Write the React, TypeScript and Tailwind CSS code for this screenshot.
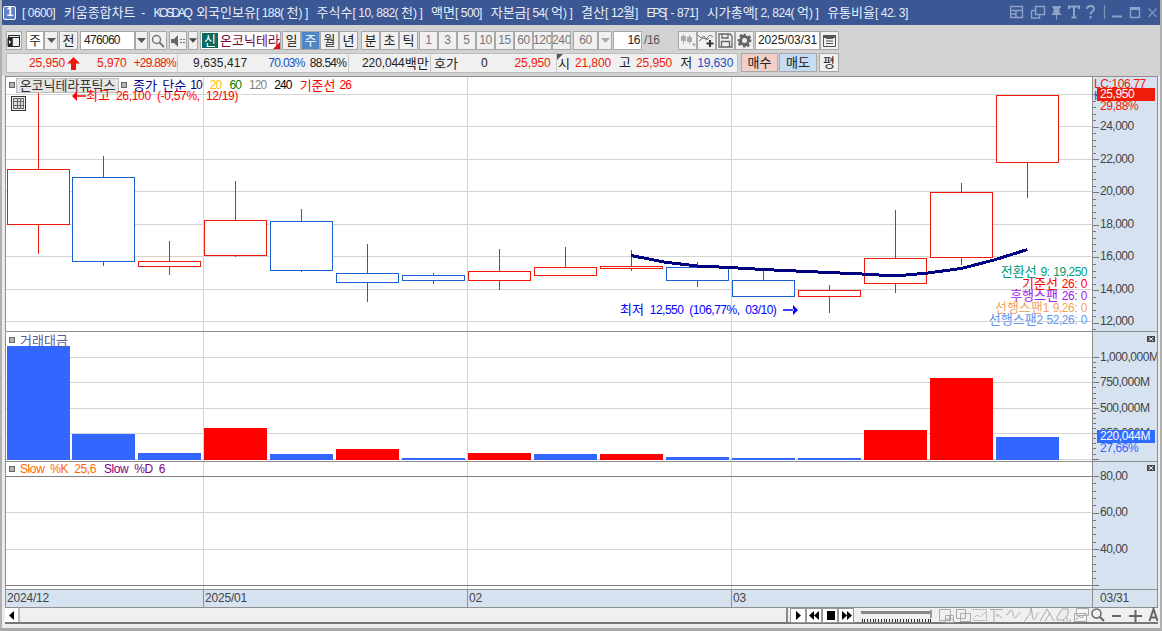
import type { ReactNode } from "react";

const RED = "#f01808";
const BLUE = "#1a5fd0";
const HANGUL = /([\uAC00-\uD7A3]+)/;
const PUNCT = /([\[\](),.\-])/;

const candles = [
  { top: 169, bot: 224, hi: 92, lo: 254, up: true },
  { top: 177, bot: 261, hi: 156, lo: 266, up: false },
  { top: 261, bot: 266, hi: 241, lo: 275, up: true },
  { top: 220, bot: 255, hi: 181, lo: 257, up: true },
  { top: 221, bot: 270, hi: 209, lo: 272, up: false },
  { top: 273, bot: 282, hi: 244, lo: 302, up: false },
  { top: 275, bot: 280, hi: 273, lo: 284, up: false },
  { top: 271, bot: 280, hi: 249, lo: 290, up: true },
  { top: 267, bot: 275, hi: 247, lo: 275, up: true },
  { top: 266, bot: 268, hi: 250, lo: 271, up: true },
  { top: 267, bot: 280, hi: 262, lo: 287, up: false },
  { top: 280, bot: 296, hi: 269, lo: 297, up: false },
  { top: 290, bot: 296, hi: 285, lo: 313, up: true },
  { top: 258, bot: 283, hi: 210, lo: 293, up: true },
  { top: 192, bot: 257, hi: 183, lo: 265, up: true },
  { top: 95, bot: 162, hi: 95, lo: 198, up: true },
];

const volumes = [
  { top: 346, up: false },
  { top: 434, up: false },
  { top: 453, up: false },
  { top: 428, up: true },
  { top: 454, up: false },
  { top: 449, up: true },
  { top: 458, up: false },
  { top: 453, up: true },
  { top: 454, up: false },
  { top: 454, up: true },
  { top: 457, up: false },
  { top: 458, up: false },
  { top: 458, up: false },
  { top: 430, up: true },
  { top: 378, up: true },
  { top: 437, up: false },
];

const vLines = [203, 467, 731];

// first bar sits 1px off the 66px period
const barX = (i: number) => (i === 0 ? 7 : 6 + 66 * i);

// hangul runs are 12px wide per glyph in the reference
function Tx({ children }: { children: string }) {
  return (
    <>
      {children.split(HANGUL).map((part, i) =>
        i % 2 === 1 ? (
          <span key={i} className="text-[13px] tracking-[0px]">
            {part}
          </span>
        ) : (
          part
        ),
      )}
    </>
  );
}

// 타이틀: 괄호/구두점도 반각 폭
function TitleTx({ children }: { children: string }) {
  return (
    <>
      {children.split(PUNCT).map((part, i) =>
        i % 2 === 1 ? (
          <span key={i} className="tracking-[2.5px]">
            {part}
          </span>
        ) : (
          <Tx key={i}>{part}</Tx>
        ),
      )}
    </>
  );
}

function SvgTx({ children }: { children: string }) {
  return (
    <>
      {children.split(HANGUL).map((part, i) =>
        i % 2 === 1 ? (
          <tspan key={i} fontSize={13} letterSpacing={0}>
            {part}
          </tspan>
        ) : (
          <tspan key={i}>{part}</tspan>
        ),
      )}
    </>
  );
}

function Grid({ ys, y1, y2 }: { ys: number[]; y1: number; y2: number }) {
  return (
    <g shapeRendering="crispEdges" stroke="#d4d4d4">
      {ys.map((y) => (
        <line key={y} x1={6} x2={1092} y1={y + 0.5} y2={y + 0.5} />
      ))}
      {vLines.map((x) => (
        <line key={x} x1={x + 0.5} x2={x + 0.5} y1={y1} y2={y2} />
      ))}
    </g>
  );
}

function Square({ className }: { className: string }) {
  return <span className={`absolute h-[6px] w-[6px] border border-[#666] bg-[#b4b4b4] ${className}`} />;
}

function Axis({
  y1,
  y2,
  first,
  step,
  labels,
  children,
}: {
  y1: number;
  y2: number;
  first: number;
  step: number;
  labels: { y: number; t: string }[];
  children?: ReactNode;
}) {
  const ticks: { y: number; major: boolean }[] = [];
  let n = 0;
  for (let y = first; y < y2; y += step / 5) {
    ticks.push({ y: Math.round(y), major: n % 5 === 0 });
    n++;
  }
  return (
    <div className="relative w-[66px] shrink-0 border-x border-[#8f8f8f] bg-[#d6e2f0]">
      <svg className="block h-full w-full" viewBox={`1093 ${y1} 64 ${y2 - y1}`} preserveAspectRatio="none">
        <g shapeRendering="crispEdges" stroke="#777">
          {ticks.map((t) => (
            <line key={t.y} x1={1093} x2={t.major ? 1099 : 1096} y1={t.y + 0.5} y2={t.y + 0.5} />
          ))}
        </g>
        {labels.map((l) => (
          <text key={l.t} x={1100} y={l.y + 5} fill="#444" fontSize={12} letterSpacing={-0.5}>
            {l.t}
          </text>
        ))}
      </svg>
      {children}
    </div>
  );
}

function CloseBox({ className }: { className: string }) {
  return (
    <span className={`absolute flex h-[6px] w-[8px] items-center justify-center bg-[#444] ${className}`}>
      <svg width="6" height="4" viewBox="0 0 6 4" stroke="#fff" strokeWidth="1">
        <path d="M.5 0l5 4M5.500 0l-5 4" />
      </svg>
    </span>
  );
}

function Btn({
  className = "",
  bg = "bg-[#f0f0f0]",
  children,
}: {
  className?: string;
  bg?: string;
  children?: ReactNode;
}) {
  return (
    <div className={`flex h-[19px] shrink-0 items-center justify-center border border-[#a8a8a8] ${bg} ${className}`}>
      {typeof children === "string" ? <Tx>{children}</Tx> : children}
    </div>
  );
}

function Caret({ color = "#555" }: { color?: string }) {
  return (
    <svg width="9" height="5" viewBox="0 0 9 5">
      <path d="M0 0h9L4.500 5z" fill={color} />
    </svg>
  );
}

function TitleIcons() {
  return (
    <div className="ml-auto flex shrink-0 items-center text-[#8ea3c7]">
      <svg width="152" height="25" viewBox="1010 0 152 25" fill="none" stroke="currentColor" strokeWidth="1.4">
        <path d="M1010.500 6.500h12v11h-12zM1010.500 10.500h12M1016 11v6.500M1011 14h5" />
        <path d="M1035.500 6.500h9v8h-9zM1031.500 10.500h5M1031.500 10.500v7.500h8v-3" />
        <path
          d="M1053 6h8v1.500l-1.500 1v4l2.500 2.500h-5v4.500h-1v-4.500h-5l2.500-2.500v-4l-1.500-1z"
          fill="currentColor"
          stroke="none"
        />
        <path d="M1069 9V6.500h10V9M1074 6.500v11M1071.500 17.500h5" strokeWidth="2" />
        <path d="M1087 9c0-4 7-4 7 0c0 2.500-3.500 2.500-3.500 5.500M1090.500 16v2.500" strokeWidth="2" />
        <path d="M1104.500 5v14" stroke="#7d8fb2" />
        <path d="M1112 16.500h10" strokeWidth="2" />
        <path d="M1130.500 8h9v9.500h-9z" />
        <path d="M1130 8.500h10" strokeWidth="3" />
        <path d="M1148.500 8.500l8 8.500M1156.500 8.500l-8 8.500" stroke="#7c92ba" />
      </svg>
    </div>
  );
}

function Toolbar() {
  return (
    <div className="flex h-[26px] shrink-0 items-end pb-[1px] pl-[4px]">
      <Btn className="w-[16px]">
        <svg width="14" height="14" viewBox="0 0 14 14" fill="none" stroke="#222">
          <path d="M1.500 1.500h11v11h-11zM1 3.500h12M5 3.500v9" />
          <path d="M1 4h4v8.500H1z" fill="#222" />
          <path d="M2 6l2 2-2 2z" fill="#fff" stroke="none" />
        </svg>
      </Btn>
      <Btn className="ml-[4px] w-[18px]" bg="bg-white">
        주
      </Btn>
      <Btn className="w-[14px]">
        <Caret />
      </Btn>
      <Btn className="ml-[1px] w-[19px]">전</Btn>
      <Btn className="ml-[2px] w-[55px] justify-start pl-[3px] tracking-[-0.7px]" bg="bg-white">
        476060
      </Btn>
      <Btn className="w-[13px]">
        <Caret />
      </Btn>
      <Btn className="ml-[1px] w-[18px]">
        <svg width="14" height="14" viewBox="0 0 14 14" fill="none" stroke="#777" strokeWidth="1.500">
          <circle cx="5.500" cy="5.500" r="4" />
          <path d="M8.500 8.500l4.500 4.500" strokeWidth="2" />
        </svg>
      </Btn>
      <Btn className="ml-[2px] w-[18px]">
        <svg width="14" height="12" viewBox="0 0 14 12">
          <path d="M0 4h3l4-4v12l-4-4H0z" fill="#666" />
          <path d="M9 4h2v1H9zM12 4h2v1h-2zM9 7h2v1H9zM12 7h2v1h-2z" fill="#777" />
        </svg>
      </Btn>
      <Btn className="ml-[1px] w-[10px]">
        <Caret color="#444" />
      </Btn>
      <div className="relative ml-[2px] flex h-[19px] w-[81px] shrink-0 items-center border border-[#a8a8a8] bg-white">
        <span className="ml-[1px] flex h-[15px] w-[16px] items-center justify-center bg-[#0b6a5e] text-white">
          <Tx>신</Tx>
        </span>
        <span className="ml-[2px] whitespace-nowrap text-[#7a0a3c]">
          <Tx>온코닉테라</Tx>
        </span>
        <span className="absolute right-0 bottom-0 h-0 w-0 border-b-[7px] border-l-[7px] border-b-[#e01010] border-l-transparent" />
      </div>
      <div className="ml-[1px] flex">
        <Btn className="w-[19px]">일</Btn>
        <Btn className="w-[19px] text-white" bg="bg-[#4f86c6]">
          주
        </Btn>
        <Btn className="w-[19px]">월</Btn>
        <Btn className="w-[19px]">년</Btn>
      </div>
      <div className="ml-[3px] flex">
        <Btn className="w-[19px]">분</Btn>
        <Btn className="w-[19px]">초</Btn>
        <Btn className="w-[19px]">틱</Btn>
      </div>
      <div className="ml-[1px] flex text-[#777]">
        {["1", "3", "5", "10", "15", "60", "120", "240"].map((n) => (
          <Btn key={n} className="w-[19px] overflow-hidden">
            {n}
          </Btn>
        ))}
      </div>
      <Btn className="ml-[2px] w-[25px] text-[#777]">60</Btn>
      <Btn className="w-[14px]">
        <Caret color="#aaa" />
      </Btn>
      <Btn className="ml-[1px] w-[29px] justify-end pr-[1px]" bg="bg-white">
        16
      </Btn>
      <span className="ml-[2px] flex h-[19px] w-[34px] items-center text-[#555]">/16</span>
      <Btn className="w-[19px]">
        <svg width="16" height="15" viewBox="0 0 16 15" fill="#aaa">
          <path d="M1 3h2V1h1v2h2v5H4v3H3V8H1zM7 4h2V2h1v2h2v5h-2v2H9V9H7zM12 11h1.500V9.500h1V11H16v1h-1.500v1.500h-1V12H12z" />
        </svg>
      </Btn>
      <Btn className="w-[19px]">
        <svg width="17" height="15" viewBox="0 0 17 15" fill="none" stroke="#555">
          <path d="M0 2l3 3 3-2 3 4 2-2M1 8l4-3 3 1 4-4 3 2" strokeWidth="0.8" />
          <path d="M12 7v7M8.500 10.500h7" stroke="#333" strokeWidth="2" />
        </svg>
      </Btn>
      <Btn className="w-[19px]">
        <svg width="15" height="15" viewBox="0 0 15 15" fill="none" stroke="#666" strokeWidth="1.300">
          <path d="M1 1h11l2 2v11H1zM4 1v4h6V1M3.500 14V8.500h8V14" />
        </svg>
      </Btn>
      <Btn className="w-[19px]">
        <svg width="15" height="15" viewBox="0 0 24 24" fill="#666">
          <path d="M10 1h4l.6 3.200 2.500 1 2.700-1.800 2.800 2.800-1.800 2.700 1 2.500L23 10v4l-3.200.6-1 2.500 1.800 2.700-2.800 2.800-2.700-1.800-2.500 1L14 23h-4l-.6-3.200-2.500-1-2.700 1.800-2.800-2.800 1.800-2.700-1-2.500L1 14v-4l3.200-.6 1-2.500L3.400 4.200l2.800-2.800 2.700 1.800 2.500-1zM12 8a4 4 0 100 8 4 4 0 000-8z" />
        </svg>
      </Btn>
      <Btn className="ml-[1px] w-[65px] tracking-[-0.1px]" bg="bg-white">
        2025/03/31
      </Btn>
      <Btn className="w-[19px]">
        <svg width="13" height="13" viewBox="0 0 13 13" fill="none" stroke="#555">
          <path d="M.5 1.500h12v11H.5zM3 4.500h7M3 7h7M3 9.500h7" />
          <path d="M.5 1.500h12v2H.5z" fill="#555" />
        </svg>
      </Btn>
    </div>
  );
}

function InfoBar() {
  return (
    <div className="flex h-[25px] shrink-0 items-start pt-[2px] pl-[4px] tracking-[-0.1px] whitespace-nowrap">
      <div className="flex h-[20px] w-[732px] shrink-0 items-center border border-[#bdbdbd] bg-[#f0f0f0]">
        <div className="flex h-full w-[171px] items-center border-r border-[#c8c8c8] pl-[22px] text-[#f01808]">
          <span>25,950</span>
          <svg className="ml-[2px]" width="13" height="13" viewBox="0 0 13 13" fill="#f01808">
            <path d="M6.500 0L13 6.500H9V13H4V6.500H0z" />
          </svg>
          <span className="ml-[17px]">5,970</span>
          <span className="ml-[7px] tracking-[-0.8px]">+29.88%</span>
        </div>
        <div className="flex h-full w-[171px] items-center border-r border-[#c8c8c8] pl-[15px]">
          <span className="tracking-[0.1px]">9,635,417</span>
          <span className="ml-[21px] tracking-[-0.7px] text-[#1a4fc0]">70.03%</span>
          <span className="ml-[5px] tracking-[-0.7px]">88.54%</span>
        </div>
        <div className="flex h-full w-[82px] items-center border-r border-[#c8c8c8] pl-[13px]">
          <Tx>220,044백만</Tx>
        </div>
        <div className="flex h-full w-[126px] items-center border-r border-[#c8c8c8] pl-[3px]">
          <Tx>호가</Tx>
          <span className="ml-[23px]">0</span>
          <span className="ml-[27px] text-[#f01808]">25,950</span>
        </div>
        <div className="relative flex h-full flex-1 items-center pl-[1px]">
          <span className="absolute top-0 left-0 h-0 w-0 border-t-[6px] border-r-[6px] border-t-[#555] border-r-transparent" />
          <Tx>시</Tx>
          <span className="ml-[5px] text-[#f01808]">21,800</span>
          <span className="ml-[8px]">
            <Tx>고</Tx>
          </span>
          <span className="ml-[5px] text-[#f01808]">25,950</span>
          <span className="ml-[8px]">
            <Tx>저</Tx>
          </span>
          <span className="ml-[5px] text-[#1a4fc0]">19,630</span>
        </div>
      </div>
      <Btn className="ml-[3px] w-[37px]" bg="bg-[#f3cfc9]">
        매수
      </Btn>
      <Btn className="ml-[1px] w-[38px]" bg="bg-[#c5dcf2]">
        매도
      </Btn>
      <Btn className="ml-[2px] w-[20px]">평</Btn>
    </div>
  );
}

function PricePane() {
  const line =
    "631,255.5 664,262 697,266 730,267.5 763,269.5 796,271 829,272.5 862,274 895,276 928,273 961,268.5 994,260 1027.5,249.5";
  const overlay = [
    { y: 271, t: "전환선 9: 19,250", c: "#009a7a" },
    { y: 283, t: "기준선 26: 0", c: "#ff0000" },
    { y: 295, t: "후행스팬 26: 0", c: "#a020f0" },
    { y: 307, t: "선행스팬1 9,26: 0", c: "#f4a460" },
    { y: 319, t: "선행스팬2 52,26: 0", c: "#6495ed" },
  ];
  return (
    <div className="flex h-[256px] shrink-0 border-y border-[#8f8f8f]">
      <div className="relative flex-1 border-l border-[#8f8f8f] bg-white">
        <svg className="block h-full w-full" viewBox="6 77 1086 254" preserveAspectRatio="none">
          <Grid ys={[94, 126, 159, 191, 224, 256, 289, 321]} y1={77} y2={331} />
          <g shapeRendering="crispEdges" fill="white">
            {candles.map((c, i) => {
              const x = barX(i);
              const col = c.up ? RED : BLUE;
              return (
                <g key={x} stroke={col}>
                  <line x1={x + 31.5} x2={x + 31.5} y1={c.hi} y2={c.lo} />
                  <rect x={x + 0.5} y={c.top + 0.5} width={62} height={c.bot - c.top} />
                </g>
              );
            })}
          </g>
          <polyline points={line} fill="none" stroke="#000080" strokeWidth="3" shapeRendering="crispEdges" />
          <path d="M783 309.200h11v1.600h-11zM798 310l-5-5v10z" fill="#0000ff" />
          {overlay.map((o) => (
            <text
              key={o.y}
              x={1087}
              y={o.y + 5}
              textAnchor="end"
              fill={o.c}
              fontSize={12}
              letterSpacing={-0.5}
              wordSpacing={1}
            >
              <SvgTx>{o.t}</SvgTx>
            </text>
          ))}
          <text x={620} y={314} fill="#0000ff" fontSize={12} letterSpacing={-0.5}>
            <SvgTx>최저 12,550 (106,77%, 03/10)</SvgTx>
          </text>
        </svg>
        <Square className="top-[5px] left-[3px]" />
        <div className="absolute top-[1px] left-[10px] flex h-[15px] w-[103px] items-center justify-center border border-[#bbb] bg-[#e6e6e6] text-[#333]">
          <Tx>온코닉테라퓨틱스</Tx>
        </div>
        <Square className="top-[5px] left-[115px]" />
        <div className="absolute top-[1px] left-[127px] flex h-[15px] items-center tracking-[-0.9px] whitespace-nowrap">
          <span className="text-[#000080]">
            <Tx>종가 단순</Tx>
          </span>
          <span className="ml-[4px] text-[#000080]">10</span>
          <span className="ml-[8px] text-[#ffc000]">20</span>
          <span className="ml-[8px] text-[#008000]">60</span>
          <span className="ml-[8px] text-[#808080]">120</span>
          <span className="ml-[8px] text-black">240</span>
          <span className="ml-[8px] text-[#ff0000]">
            <Tx>기준선</Tx>
          </span>
          <span className="ml-[4px] text-[#ff0000]">26</span>
        </div>
        {/* 최고가 표시는 종목 버튼 위에 겹침 */}
        <div className="absolute top-[11px] left-[66px] flex items-center whitespace-nowrap tracking-[-0.3px] text-[#ff0000]">
          <svg width="14" height="10" viewBox="0 0 14 10" fill="#ff0000">
            <path d="M0 5l5-5v4.200h9v1.600H5V10z" />
          </svg>
          <span>
            <Tx>최고 26,100 (-0,57%, 12/19)</Tx>
          </span>
        </div>
        <div className="absolute top-[19px] left-[5px] flex h-[15px] w-[15px] items-center justify-center border border-[#333] bg-[#f0f0f0]">
          <svg width="11" height="11" viewBox="0 0 11 11" fill="#ddd" stroke="#666" shapeRendering="crispEdges">
            <path d="M.5.5h10v10H.5zM.5 3.500h10M.5 7h10M4 .5v10M7.500 .5v10" />
          </svg>
        </div>
      </div>
      <Axis
        y1={77}
        y2={331}
        first={94}
        step={32.7}
        labels={[
          { y: 125, t: "24,000" },
          { y: 158, t: "22,000" },
          { y: 190, t: "20,000" },
          { y: 223, t: "18,000" },
          { y: 255, t: "16,000" },
          { y: 288, t: "14,000" },
          { y: 320, t: "12,000" },
        ]}
      >
        <span className="absolute top-0 left-[1px] text-[#f01808]">LC:106.77</span>
        <span className="absolute top-[12px] left-[1px] text-[#1a5fd0]">H</span>
        <span className="absolute top-[11px] left-[4px] flex h-[13px] w-[58px] items-center bg-[#ee1c08] pl-[3px] text-white">
          25,950
        </span>
        <span className="absolute top-[22px] left-[7px] text-[#f01808]">29,88%</span>
      </Axis>
    </div>
  );
}

function VolumePane() {
  return (
    <div className="flex h-[130px] shrink-0 border-b border-[#8f8f8f]">
      <div className="relative flex-1 border-l border-[#8f8f8f] bg-white">
        <svg className="block h-full w-full" viewBox="6 332 1086 129" preserveAspectRatio="none">
          <Grid ys={[357, 382, 408, 433, 459]} y1={332} y2={461} />
          <g shapeRendering="crispEdges">
            {volumes.map((v, i) => (
              <rect key={i} x={barX(i)} y={v.top} width={63} height={460 - v.top} fill={v.up ? "#ff0000" : "#3366ff"} />
            ))}
          </g>
        </svg>
        <Square className="top-[5px] left-[3px]" />
        <span className="absolute top-[1px] left-[14px] text-[#5a5a9a]">
          <Tx>거래대금</Tx>
        </span>
      </div>
      <Axis
        y1={332}
        y2={461}
        first={357}
        step={25.4}
        labels={[
          { y: 356, t: "1,000,000M" },
          { y: 381, t: "750,000M" },
          { y: 407, t: "500,000M" },
          { y: 432, t: "250,000M" },
        ]}
      >
        <CloseBox className="top-[4px] left-[54px]" />
        <span className="absolute top-[98px] left-[4px] flex h-[13px] w-[58px] items-center bg-[#2f6bff] pl-[3px] text-white">
          220,044M
        </span>
        <span className="absolute top-[109px] left-[7px] text-[#3366ff]">27,66%</span>
      </Axis>
    </div>
  );
}

function SlowPane() {
  return (
    <div className="flex h-[128px] shrink-0 border-b border-[#8f8f8f]">
      <div className="relative flex-1 border-l border-[#8f8f8f] bg-white">
        <svg className="block h-full w-full" viewBox="6 462 1086 127" preserveAspectRatio="none">
          <Grid ys={[512, 549]} y1={462} y2={589} />
          <g shapeRendering="crispEdges" stroke="#808080">
            <line x1={6} x2={1092} y1={476.5} y2={476.5} />
            <line x1={6} x2={1092} y1={585.5} y2={585.5} />
          </g>
        </svg>
        <Square className="top-[4px] left-[3px]" />
        <div className="absolute top-0 left-[14px] whitespace-nowrap">
          <span className="text-[#ff6600]">Slow %K 25,6</span>
          <span className="ml-[8px] text-[#800080]">Slow %D 6</span>
        </div>
      </div>
      <Axis
        y1={462}
        y2={589}
        first={476}
        step={36.5}
        labels={[
          { y: 475, t: "80,00" },
          { y: 511, t: "60,00" },
          { y: 548, t: "40,00" },
        ]}
      >
        <CloseBox className="top-[3px] left-[54px]" />
      </Axis>
    </div>
  );
}

function DateAxis() {
  return (
    <div className="flex h-[18px] shrink-0 border-b border-[#8f8f8f] bg-[#d6e2f0] tracking-[-0.2px] text-[#444]">
      <div className="w-[198px] shrink-0 border-l border-[#8f8f8f] pt-[1px] pl-[1px]">2024/12</div>
      <div className="w-[264px] shrink-0 border-l border-[#8f8f8f] pt-[1px] pl-[1px]">2025/01</div>
      <div className="w-[264px] shrink-0 border-l border-[#8f8f8f] pt-[1px] pl-[1px]">02</div>
      <div className="w-[361px] shrink-0 border-l border-[#8f8f8f] pt-[1px] pl-[1px]">03</div>
      <div className="flex-1 border-x border-[#8f8f8f] pt-[1px] pl-[7px]">03/31</div>
    </div>
  );
}

function PlayBtn({ d }: { d: string }) {
  return (
    <div className="flex h-[15px] w-[16px] items-center justify-center border border-[#999] bg-white">
      <svg width="11" height="9" viewBox="0 0 11 9" fill="#000">
        <path d={d} />
      </svg>
    </div>
  );
}

function BottomBar() {
  const ticks = Array.from({ length: 27 }, (_, i) => i * 2.75);
  return (
    <div className="flex h-[16px] shrink-0 items-center border-b-2 border-[#777] bg-[#f0f0f0]">
      <div className="flex h-full w-[15px] items-center justify-center border-r-2 border-[#bbb] bg-white">
        <svg width="5" height="9" viewBox="0 0 5 9">
          <path d="M5 0v9L0 4.500z" fill="#000" />
        </svg>
      </div>
      <div className="h-full w-[768px] border-r-2 border-[#888]" />
      <div className="ml-[2px] flex">
        <PlayBtn d="M3 0l5 4.500-5 4.500z" />
        <PlayBtn d="M5 0v9L0 4.500zM10 0v9L5 4.500z" />
        <PlayBtn d="M2 0h8v9H2z" />
        <PlayBtn d="M1 0l5 4.500L1 9zM6 0l5 4.500L6 9z" />
      </div>
      <div className="ml-[7px]">
        <svg className="block" width="72" height="16" viewBox="0 0 72 16" fill="none">
          <path d="M0 5.500h69" stroke="#888" strokeWidth="3" />
          <path d="M69 3h2v7l-2 2z" fill="#999" />
          <g stroke="#333" shapeRendering="crispEdges">
            {ticks.map((x) => (
              <line key={x} x1={x + 1} x2={x + 1} y1={12} y2={15} />
            ))}
          </g>
        </svg>
      </div>
      <svg className="ml-[5px] shrink-0" width="220" height="16" viewBox="939 608 220 16" fill="none" stroke="#aaa">
        <path d="M940.500 610.500h11v11h-11zM946.500 616.500h8v7h-8zM950.500 616.500v7M946.500 620h8" />
        <path d="M957.500 610.500h9v9h-9zM961.500 614.500h10v8h-10z" fill="#f0f0f0" />
        <path d="M973.500 610.500h14v11h-14M974 620l4-4 3 2 6-5" strokeDasharray="2 1" />
        <path d="M991 610.500h13M995 611v12M998 615l5 4M998 615v3" />
        <path d="M1007 616c3 0 3-5 5-5s2 8 4 8 2-5 6-5" />
        <path d="M1025 622c3 0 3-6 5-6s1-7 2-7 1 12 3 12 2-7 5-7" />
        <path d="M1041 622l7-12 7 12M1046 622l5-8" />
        <path d="M1058 618l5-8h6v6l-5 5h-6zM1068 618v5M1071 620v3M1065 621v2" fill="#eee" />
        <path d="M1077.500 609.500h12v7h-12zM1075.500 614.500h12v8h-12zM1077 621l3-4 3 2 3-4" fill="#f4f4f4" />
        <circle cx="1097.500" cy="614.500" r="4.500" stroke="#666" strokeWidth="1.500" />
        <path d="M1101 618l4 4M1113 617h9M1130 617h13M1136.500 611v12" stroke="#666" strokeWidth="2" />
        <path d="M1150.500 622l4-12 4 12M1152 618.500h5" stroke="#666" strokeWidth="2" />
      </svg>
    </div>
  );
}

export default function App() {
  return (
    <div className="flex h-[631px] w-[1162px] flex-col overflow-hidden border-x-2 border-b-[3px] border-x-[#b0b0b0] border-b-[#a8a8a8] bg-[#d2d2d2] [font-family:'Liberation_Sans','Noto_Sans_CJK_KR',sans-serif] text-[12px] leading-[15px] tracking-[-0.4px] [word-spacing:3px] text-[#222]">
      {/* Title */}
      <div className="-mx-[2px] flex h-[25px] shrink-0 items-center bg-[#3b5794] pl-[3px] tracking-[-0.6px] text-[#e8eefa]">
        <span className="flex h-[14px] w-[13px] items-center justify-center rounded-[2px] border border-white bg-[#5f82c4] font-bold text-white">
          1
        </span>
        <span className="ml-[6px] whitespace-nowrap">
          <TitleTx>[0600] 키움종합차트 - </TitleTx>
          <span className="tracking-[-2.4px]">KOSDAQ</span>
          <TitleTx> 외국인보유[188(천)] 주식수[10,882(천)] 액면[500] 자본금[54(억)] 결산[12월] </TitleTx>
          <span className="tracking-[-2px]">EPS</span>
          <TitleTx>[-871] 시가총액[2,824(억)] 유통비율[42.3]</TitleTx>
        </span>
        <TitleIcons />
      </div>

      <Toolbar />
      <InfoBar />

      <div className="flex min-h-0 flex-1 flex-col bg-[#ececec] pr-[2px] pl-[3px]">
        <PricePane />
        <VolumePane />
        <SlowPane />
        <DateAxis />
        <BottomBar />
      </div>
    </div>
  );
}
